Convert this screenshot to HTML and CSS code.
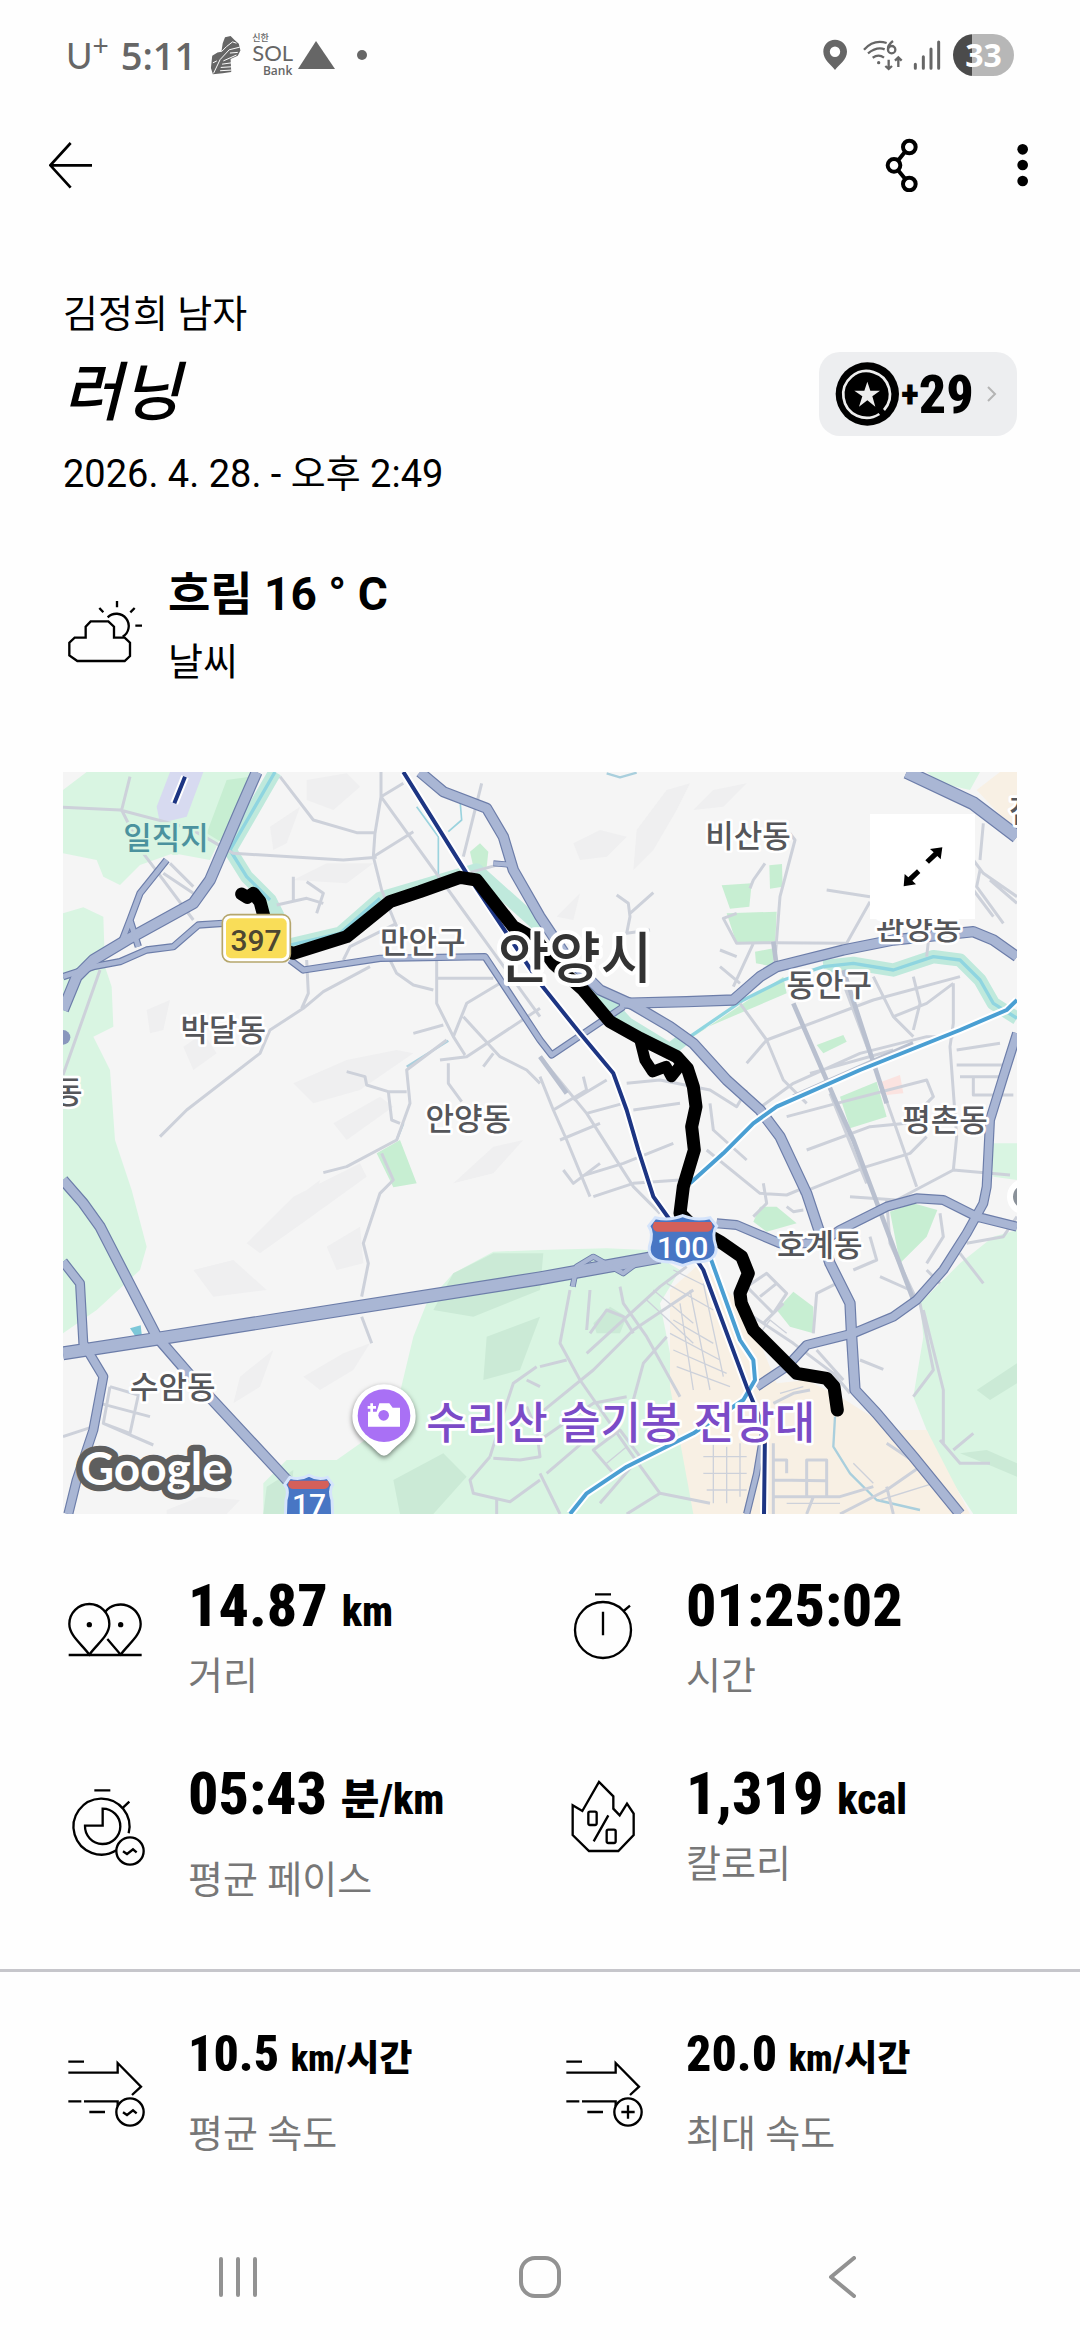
FILE: index.html
```html
<!DOCTYPE html>
<html lang="ko">
<head>
    <meta charset="UTF-8">
    <meta name="viewport" content="width=device-width, initial-scale=1.0">
    <title>러닝</title>
    <link rel="stylesheet" href="styles.css">
</head>
<body>
    <!-- Status bar -->
    <div class="status-bar">
        <div class="status-left">
            <span class="carrier">U<sup>+</sup></span>
            <span class="clock">5:11</span>
            <svg class="shoe" viewBox="610 105 96 122" aria-hidden="true">
                <path fill="#666" d="M655 112 672 108 684 120 697 132 702 152 694 168 672 178 674 218 648 222 618 225 612 206 616 168 632 158 644 156 648 130Z"/>
                <path fill="none" stroke="#fff" stroke-width="3" d="M620 222 640 180 668 150 700 142M644 156 660 140 678 126 690 130M650 184 690 166M646 194 674 190M642 204 674 202M640 214 674 212M618 190 630 184M670 160 694 158"/>
            </svg>
            <span class="sol"><span class="sol-top">신한</span><span class="sol-name">SOL</span><span class="sol-bank">Bank</span></span>
            <svg class="triangle" viewBox="0 0 37 28" aria-hidden="true"><path fill="#666" d="M18 0 37 28H0Z"/></svg>
            <span class="dot"></span>
        </div>
        <div class="status-right">
            <svg width="24" height="32" viewBox="808 116 74 94" aria-hidden="true"><path fill="#666" fill-rule="evenodd" d="M845 116c-21 0-36 16-36 37 0 24 24 41 36 56 12-15 37-32 37-56 0-21-16-37-37-37Zm0 21a16 16 0 1 1 0 32 16 16 0 0 1 0-32Z"/></svg>
            <svg class="wifi" width="40" height="32" viewBox="928 116 120 96" aria-hidden="true">
                <g fill="none" stroke="#666" stroke-width="7">
                    <path d="M931 148Q960 116 999 128M943 159Q970 138 993 147M957 172Q975 160 991 172"/>
                    <path d="M1018 122Q1002 134 1003 147M1005 178V205M995 197 1005 206 1015 197M1034 200V173M1024 181 1034 171 1044 181"/>
                    <circle cx="1014" cy="148" r="11"/>
                </g>
                <circle cx="975" cy="187" r="5" fill="#666"/>
            </svg>
            <svg width="28" height="30" viewBox="1072 118 84 90" aria-hidden="true"><path stroke="#666" stroke-width="9" stroke-linecap="round" d="M1079 191V203M1103 168V203M1126 145V203M1149 124V203"/></svg>
            <span class="battery">33</span>
        </div>
    </div>

    <!-- App bar -->
    <header class="app-bar">
        <button type="button" class="icon-button" aria-label="뒤로">
            <svg width="44" height="48" viewBox="147 426 132 144"><path fill="none" stroke="#000" stroke-width="8" d="M276 499H152M212 432 151 499 212 566"/></svg>
        </button>
        <div class="app-actions">
            <button type="button" class="icon-button" aria-label="공유">
                <svg width="34" height="54" viewBox="991 410 102 162">
                    <g fill="none" stroke="#000" stroke-width="12"><path d="M1032 475 1050 453M1032 509 1050 531"/><circle cx="1064" cy="437" r="19"/><circle cx="1018" cy="492" r="19"/><circle cx="1064" cy="548" r="19"/></g>
                </svg>
            </button>
            <button type="button" class="icon-button" aria-label="더보기">
                <svg width="12" height="44" viewBox="1384 427 36 132"><circle cx="1401" cy="446" r="16"/><circle cx="1401" cy="493" r="16"/><circle cx="1401" cy="541" r="16"/></svg>
            </button>
        </div>
    </header>

    <main>
        <section class="activity">
            <p class="text">김정희 남자</p>
            <div class="title-row">
                <h1>러닝</h1>
                <a class="points" href="#points">
                    <svg width="64" height="64" viewBox="164 98 192 192" aria-hidden="true">
                        <circle cx="261" cy="194" r="95"/>
                        <path fill="none" stroke="#eee" stroke-width="8" d="M311 242A70 70 0 1 0 297 254"/>
                        <path fill="#eee" d="M261 157 270 184 299 184 276 201 285 232 261 213 236 232 246 201 222 184 252 184Z"/>
                    </svg>
                    <span class="plus">+</span><span>29</span>
                    <svg class="chevron" width="10" height="16" viewBox="0 0 10 16" aria-hidden="true"><path fill="none" stroke="#b4b4b4" stroke-width="2" d="M1 1 8 8 1 15"/></svg>
                </a>
            </div>
            <p class="text">2026. 4. 28. - 오후 2:49</p>
        </section>

        <section class="weather">
            <svg class="icon" viewBox="72 960 240 240" aria-hidden="true">
                <path d="M137 1103V1070L152 1054H205L222 1070V1103H254L270 1118V1158L254 1173H112L88 1156V1118L104 1103Z"/>
                <path d="M203 1042A37 37 0 1 1 248 1100M231 993V1012M178 1014 190 1027M284 1014 271 1027M286 1067H306"/>
            </svg>
            <div>
                <p class="weather-value">흐림 16 ° C</p>
                <p class="text">날씨</p>
            </div>
        </section>

        <section class="map">
            <svg viewBox="9 6 2862 2226" role="img" aria-label="안양시 러닝 경로">
                <rect x="9" y="6" width="2862" height="2226" fill="#f5f5f5"/>
                <!-- Hills -->
                <g class="hills">
                    <path d="M740 30 860 10 900 50 820 120 740 90ZM630 170 720 110 680 220 640 240ZM700 330 800 280 940 280 860 340Z"/>
                    <path d="M1540 220 1620 180 1700 200 1640 260 1560 270ZM1730 180 1820 60 1890 40 1850 120 1780 240 1720 300ZM1490 440 1560 370 1540 450ZM1900 120 1960 60 2060 40 1990 110Z"/>
                    <path d="M260 720 330 690 310 780 270 790ZM370 830 430 790 470 850 400 900ZM700 940 860 870 1010 840 1060 850 900 960 760 1000ZM820 1060 960 980 1000 1010 860 1110Z"/>
                    <path d="M700 1290 780 1230 760 1310 700 1340ZM560 1420 700 1280 900 1180 920 1220 740 1350 600 1450ZM800 1430 900 1370 910 1480 830 1500ZM730 1820 850 1750 930 1720 880 1800 780 1860ZM540 1820 640 1740 600 1850 520 1900ZM1180 1240 1300 1130 1390 1110 1300 1210ZM400 1500 520 1470 620 1560 460 1580ZM320 2220 420 2180 540 2190 500 2232H320Z"/>
                </g>
                <!-- Parks and town blocks -->
                <g fill="#d9f5e2">
                    <path d="M9 60 80 6H575L450 270 340 250 240 285 180 345 130 320 110 270 9 250Z"/>
                    <path d="M9 430 70 412 130 440 135 590 155 650 160 770 100 800 150 900 165 1110 215 1260 260 1430 240 1500 110 1620 9 1690Z"/>
                    <path d="M1180 1510 1300 1445 1440 1440 1640 1435 1760 1440 1860 1500 1800 1600 1850 1850 1900 2120 1950 2232H610V2140L680 2070 830 2070 1000 1950 1060 1700 1100 1600Z"/>
                    <path d="M2800 1400 2871 1380V2232H2740L2640 2080 2600 1980 2560 1880 2590 1700 2580 1600 2700 1480Z"/>
                    <path d="M2790 1120 2871 1120V1230L2800 1220ZM2600 6H2760L2730 60 2640 40Z"/>
                </g>
                <g fill="#cbead6">
                    <path d="M1180 1510 1300 1450 1450 1450 1440 1560 1240 1640 1120 1620ZM1280 1700 1440 1640 1380 1800 1270 1830ZM1000 2130 1150 2050 1220 2120 1120 2232H1020ZM620 2150 700 2100 690 2232H610Z"/>
                    <path d="M2750 1860 2871 1780V1840L2790 1890ZM2700 2050 2800 2090 2871 2120V2080L2780 2040ZM1600 1660 1650 1610 1700 1640 1680 1690 1610 1690Z"/>
                </g>
                <path fill="#f8f0e4" d="M1830 1560 1920 1480 2060 1620 2150 1840 2240 1830 2340 1880 2500 1980 2600 1980 2730 2232H1900L1830 1850ZM2750 60 2820 6H2871V190Z"/>
                <g fill="#c7eed2">
                    <path d="M2128 286 2166 282 2168 350 2130 356ZM1985 346 2075 340 2068 410 2010 416ZM2000 430 2150 425 2146 515 2030 522ZM2085 545 2140 535 2140 590 2088 580ZM1900 800 2170 620 2180 670 1910 785ZM2270 825 2350 795 2360 815 2290 850ZM2340 980 2450 935 2480 1040 2370 1075Z"/>
                    <path d="M2080 1355 2100 1310 2150 1310 2210 1360 2120 1385ZM2490 1325 2560 1300 2632 1320 2600 1400 2520 1480ZM2150 1620 2200 1565 2260 1610 2260 1690 2190 1670ZM1230 245 1260 220 1285 245 1280 292 1240 290ZM950 1150 1020 1110 1070 1240 1000 1252ZM440 190 500 30 570 20 490 220Z"/>
                </g>
                <path fill="#fbe3e0" d="M2465 935 2520 915 2530 970 2480 975Z"/>
                <path fill="#d7daf0" d="M290 110 330 6H430L380 140 300 160Z"/>
                <path fill="#7cc7d8" d="M210 1675 242 1666 246 1700 228 1702Z"/>
                <!-- Streams -->
                <g fill="none" stroke-linejoin="round">
                    <path stroke="#bfe9dc" stroke-width="40" d="M645 6 510 240 560 320 630 390 660 450M690 525 840 490 960 385 1130 335 1250 300 1440 470M1600 650 1700 760 1830 840 1880 800M2290 590 2380 580 2500 600 2620 560 2700 570 2760 630 2800 700 2871 745"/>
                    <path stroke="#8fd5e0" stroke-width="10" d="M645 6 510 240 560 320 630 390M690 525 840 490 960 385M1890 800 2050 690 2170 630 2290 590 2380 580 2500 600 2620 560 2700 570 2760 630 2800 700 2871 745"/>
                    <path stroke="#9bd3de" stroke-width="5" d="M1135 330V200L1070 110M1165 185 1205 150 1200 90"/>
                    <path stroke="#a9cfdd" stroke-width="7" d="M1165 812 1040 890M1640 10 1680 22 1730 8M1030 1060 1010 1110M2325 1940 2320 2030 2370 2110 2450 2190 2580 2220"/>
                </g>
                <!-- Side streets -->
                <g class="street">
                    <path d="M9 112 180 120 390 175 520 250 850 270 950 262M210 20 185 120 250 250 400 450M660 20 760 150 890 188 945 188 940 260 965 360 1010 470M963 6 963 80 945 190M963 80 1230 450 1440 740M1060 185 940 260M963 80 1030 40M1265 40 1210 260M1220 310 1330 280M650 405 740 385 790 400M700 320V390M740 335 790 370 770 430M310 310 400 370M330 280 400 350"/>
                    <path d="M9 915 120 600M300 1100 380 1020 600 850 630 780 730 715 790 665 930 590M740 570 745 670 725 715M850 570 870 530 1010 460M990 570 1010 610 1060 645 1120 660M1130 560 1130 700 1180 800 1215 855M1060 790 1150 765M1130 625H1300M1180 800 1220 700 1320 640M1210 740 1320 860 1400 900 1440 940M1140 870 1220 860 1440 715M1165 880V940L1205 995M1270 890 1300 850M860 905 915 920 920 945 985 965 1040 965M985 965 995 1050 1020 1060M1160 810 1040 900 1050 1000 1010 1110 860 1190 790 1208"/>
                    <path d="M965 1150 1000 1230 960 1270 910 1420 925 1480 905 1580M905 1640 935 1720M150 1850 235 1875 210 1990 130 1960 150 1850M120 1900 270 1940M130 1960 280 2025M9 2000 100 1970"/>
                    <path d="M1670 375 1705 400 1710 440 1700 490 1770 480M1780 368 1710 430M2190 190 2205 210 2160 380 2145 570M2115 280 2080 330 2070 355M2030 430 1990 445 2030 520 2140 518 2360 520 2430 395M2300 360 2430 380M2080 520 2020 650M1980 540 2030 560M1980 590 2040 640"/>
                </g>
                <g class="street">
                    <path d="M2040 700 2120 810 2170 930 2240 1000M2120 810 2440 690 2700 620M2060 880 2120 810M2090 1020 2200 940 2400 850 2600 800 2680 800M2250 910 2500 840M2350 640 2440 880 2500 1050 2570 1250M2440 620 2500 740 2600 700 2680 640M2500 740 2560 800M2560 620 2580 700 2560 780M2600 560 2610 470M2680 640 2680 760 2670 830 2690 1100 2680 1200"/>
                    <path d="M2690 840 2820 820M2690 885H2840M2700 920H2820M2740 920V975H2860M2180 1040 2330 1000 2600 930 2620 980 2540 1060M2240 1140 2430 1070 2540 1060M2310 970 2420 1240M2220 1270 2420 1190 2550 1150 2600 1100M2370 1280 2510 1290 2680 1200 2850 1215M2480 1290 2490 1420 2570 1590M2740 270 2770 310 2871 380M2740 360 2800 440M2760 300 2750 350 2830 460M2770 160 2760 270M2790 330 2871 400"/>
                    <path d="M1440 860 1580 1030 1720 1250 1800 1330M1440 920 1480 1020 1520 1110 1590 1280M1480 1020 1580 960 1570 920M1500 1110 1620 1060M1540 990 1640 930M1580 1030 1690 1000M1700 940 1800 930 1950 960 2030 1010 2060 960M1720 1020 1860 1000M1950 1000 1960 1080 2060 1170M1560 1220 1690 1180 1840 1120M1600 1280 1720 1240 1860 1230M1510 1200 1540 1240 1620 1180M1940 1140 2100 1270 2180 1275 2240 1250M2110 1240 2120 1300 2080 1340M2180 1310 2200 1325 2230 1320"/>
                    <path d="M2060 1550 2120 1510 2180 1570 2140 1630ZM2100 1580 2150 1540M2080 1640 2200 1720 2320 1810 2370 1870M2110 1660 2170 1600M2270 1740 2350 1830M2260 1690 2270 1570 2330 1540M2380 1500 2450 1470 2430 1400M2460 1520 2550 1560M2640 1330 2650 1400 2600 1480M2600 1500 2640 1540M2720 1420 2830 1400 2871 1340M2700 1450 2770 1540M2580 1600 2620 1800 2560 1880M2590 1620 2650 1860 2650 2020M2400 1770 2470 1798"/>
                </g>
                <g class="street">
                    <path d="M1530 1560 1500 1720 1560 1830 1720 2060 1800 2170 1950 2200M1580 1750 1800 1550 1880 1490M1440 1930 1600 1800 1720 1680 1900 1560M1440 1790 1520 1770M1580 1680 1590 1560M1590 1690 1640 1620 1690 1640 1720 1690M1680 1550 1690 1600 1760 1700 1860 1880M1440 2010 1600 1900 1700 1880M1720 1890 1750 1780 1820 1700M1440 2110 1500 2232M1460 2110 1600 1990M1600 2040 1680 1980 1740 2060 1660 2110ZM1740 2060 1620 2200M1800 2170 1700 2232"/>
                    <path d="M2140 2020V2232M2140 2130 2300 2132M2240 2070V2180H2300V2070ZM2140 2070H2180V2110M2140 2180 2340 2180 2440 2150M2340 2232 2480 2160 2580 2090M2240 2232 2260 2180M2480 2020 2570 2080 2640 2140M2640 2010 2700 2080 2790 2080M2680 2040 2740 1990M2140 1900 2200 1870 2250 1860M2480 2150 2500 2232M1300 2065 1380 2070 1440 2060 1430 1980 1400 1910M1290 2060 1340 1900 1360 1840 1430 1790M1290 2060 1230 2130 1240 2170 1350 2195 1440 2130M1400 1830 1440 1850M1310 2232V2190"/>
                    <path class="fine" d="M1780 1560 1900 1660M1760 1590 1900 1720M1840 1500 1960 1560M1820 1540 1960 1620M1840 1650 1960 1720M1830 1690 1980 1770M1840 1740 2000 1810M1850 1790 2010 1850M1890 1560 1950 1860M1930 1540 1990 1820M1860 1600 1900 1860M1960 2010V2200M2000 2030V2200M2040 2020V2180M1930 2060H2060M1930 2110H2060M1940 2160H2060M1640 2080 1700 2030M2160 1870 2230 1850M2100 1690 2130 1650 2180 1690M2180 2200 2340 2200M2380 2080 2440 2140M2460 2190 2620 2140"/>
                </g>
                <!-- Wider streets -->
                <path class="street wide" d="M2200 700 2330 1000 2380 1110 2560 1590M2140 515 2150 590M2350 600 2480 1000M1440 860 1520 970M2200 980 2560 820"/>
                <!-- Main roads, dark edge below and fill above -->
                <g class="road-edge">
                    <path stroke-width="36" d="M590 6 540 120 450 330 400 400 200 510 100 570 50 620 9 720"/>
                    <path stroke-width="22" d="M9 620 100 590 180 575 260 540 340 530 415 465 490 460M320 270 240 370 210 450 185 515M210 450 235 530M690 570 730 600 960 565 1275 560 1440 810 1475 855 1690 710M2110 1990 2090 2110 2060 2232"/>
                    <path stroke-width="34" d="M1080 6 1150 65 1280 115 1330 200 1360 300 1440 440 1520 560 1620 660 1720 705 1830 770 1900 820 2000 930 2100 1020 2160 1100 2240 1270 2310 1480 2370 1600 2375 1700 2385 1860 2450 1930 2560 2060 2700 2232"/>
                    <path stroke-width="34" d="M1680 700 1880 695 2020 690 2100 620 2150 590 2350 540 2500 510 2740 485 2800 510 2871 560M9 1230 70 1300 120 1370 290 1700 420 1850 690 2140"/>
                    <path stroke-width="42" d="M2540 6 2740 100 2871 200M9 1750 300 1705 1440 1525 1800 1460"/>
                    <path stroke-width="30" d="M2871 790 2830 920 2790 1050 2780 1250 2770 1300 2720 1390 2650 1500 2570 1590 2500 1640 2380 1690 2240 1725 2180 1790 2090 1850M1970 1360 2030 1365 2160 1420 2280 1420 2340 1380 2480 1310 2570 1285 2650 1290 2750 1340 2871 1370M9 1475 60 1540 70 1720 130 1820 100 1980 50 2130 25 2232"/>
                    <path stroke-width="18" d="M1538 1550 1550 1490 1600 1460 1690 1510 1730 1480M1300 280 1360 285"/>
                </g>
                <g class="road">
                    <path stroke-width="29" d="M590 6 540 120 450 330 400 400 200 510 100 570 50 620 9 720"/>
                    <path stroke-width="15" d="M9 620 100 590 180 575 260 540 340 530 415 465 490 460M320 270 240 370 210 450 185 515M210 450 235 530M690 570 730 600 960 565 1275 560 1440 810 1475 855 1690 710M2110 1990 2090 2110 2060 2232"/>
                    <path stroke-width="27" d="M1080 6 1150 65 1280 115 1330 200 1360 300 1440 440 1520 560 1620 660 1720 705 1830 770 1900 820 2000 930 2100 1020 2160 1100 2240 1270 2310 1480 2370 1600 2375 1700 2385 1860 2450 1930 2560 2060 2700 2232"/>
                    <path stroke-width="27" d="M1680 700 1880 695 2020 690 2100 620 2150 590 2350 540 2500 510 2740 485 2800 510 2871 560M9 1230 70 1300 120 1370 290 1700 420 1850 690 2140"/>
                    <path stroke-width="35" d="M2540 6 2740 100 2871 200M9 1750 300 1705 1440 1525 1800 1460"/>
                    <path stroke-width="23" d="M2871 790 2830 920 2790 1050 2780 1250 2770 1300 2720 1390 2650 1500 2570 1590 2500 1640 2380 1690 2240 1725 2180 1790 2090 1850M1970 1360 2030 1365 2160 1420 2280 1420 2340 1380 2480 1310 2570 1285 2650 1290 2750 1340 2871 1370M9 1475 60 1540 70 1720 130 1820 100 1980 50 2130 25 2232"/>
                    <path stroke-width="13" d="M1538 1550 1550 1490 1600 1460 1690 1510 1730 1480M1300 280 1360 285"/>
                </g>
                <circle cx="9" cy="802" r="22" fill="#8997bd"/>
                <!-- Railways -->
                <g fill="none" stroke-linejoin="round">
                    <path stroke="#fff" stroke-width="24" d="M1030 6 1220 310 1440 640 1560 790 1660 910 1700 1020 1735 1140 1780 1280 1830 1350 1930 1500 2060 1850 2115 1980 2112 2232M2871 690 2840 720 2700 780 2400 900 2150 1010 2080 1060 1990 1150 1890 1240M1950 1460 2040 1710 2080 1770 2085 1830 2050 1890 1900 1990 1700 2090 1580 2170 1530 2232M375 20 343 100"/>
                    <path stroke="#4a9fd3" stroke-width="12" d="M2871 690 2840 720 2700 780 2400 900 2150 1010 2080 1060 1990 1150 1890 1240M1950 1460 2040 1710 2080 1770 2085 1830 2050 1890 1900 1990 1700 2090 1580 2170 1530 2232"/>
                    <path stroke="#1d3583" stroke-width="12" d="M1030 6 1220 310 1440 640 1560 790 1660 910 1700 1020 1735 1140 1780 1280 1830 1350 1930 1500 2060 1850 2115 1980 2112 2232M375 20 343 100"/>
                </g>
                <!-- Route -->
                <path class="route" d="M545 372 562 382 580 370 600 395 612 440 640 530 700 550 860 500 990 395 1080 365 1200 322 1250 330 1360 470 1430 510 1480 580 1570 660 1650 755 1740 805 1850 860 1882 895 1900 950 1908 1010 1895 1070 1903 1140 1870 1250 1860 1330 1900 1370 1980 1415 2045 1460 2065 1510 2040 1570 2044 1600 2080 1680 2210 1810 2300 1825 2322 1850 2332 1920"/>
                <path class="route loop" d="M1740 810 1755 870 1778 905 1818 890 1834 920 1862 885"/>
                <!-- Place names -->
                <g class="place">
                    <text class="water" x="318" y="237">일직지</text>
                    <text x="1088" y="550">만안구</text>
                    <text x="490" y="812">박달동</text>
                    <text x="25" y="1000">동</text>
                    <text x="1225" y="1080">안양동</text>
                    <text x="2064" y="232">비산동</text>
                    <text x="2576" y="508">관양동</text>
                    <text x="2308" y="678">동안구</text>
                    <text x="2655" y="1082">평촌동</text>
                    <text x="2279" y="1458">호계동</text>
                    <text x="338" y="1885">수암동</text>
                    <text x="2890" y="155">점</text>
                    <text class="city" x="1545" y="625">안양시</text>
                    <text class="poi" x="1682" y="2008">수리산 슬기봉 전망대</text>
                </g>
                <!-- Road numbers -->
                <rect x="487" y="434" width="204" height="142" rx="24" fill="#fff" stroke="#b5a66c" stroke-width="5"/>
                <rect x="498" y="445" width="182" height="120" rx="15" fill="#f9dd58"/>
                <text class="number dark" x="588" y="542">397</text>
                <g class="shield">
                    <path fill="#4876c4" d="M1786 1343Q1830 1353 1868 1337Q1906 1353 1950 1343L1970 1368Q1954 1390 1968 1430Q1974 1478 1900 1476L1868 1486 1836 1476Q1762 1478 1768 1430Q1782 1390 1766 1368Z"/>
                    <path fill="#d4605a" stroke="none" d="M1782 1356H1954L1958 1370Q1952 1386 1940 1385H1796Q1782 1386 1778 1370Z"/>
                    <path fill="#4876c4" d="M690 2122Q720 2132 747 2116Q774 2132 802 2122L818 2144Q806 2160 816 2190L818 2240H676L678 2190Q688 2160 674 2144Z"/>
                    <path fill="#d4605a" stroke="none" d="M688 2132H804L808 2144Q802 2158 790 2157H702Q688 2158 684 2144Z"/>
                </g>
                <text class="number" x="1868" y="1463">100</text>
                <text class="number" x="747" y="2236">17</text>
                <!-- Viewpoint pin -->
                <path class="pin" fill="#fff" d="M877 1938a95 95 0 0 1 190 0c0 58-48 76-76 109q-19 20-38 0c-28-33-76-51-76-109Z"/>
                <circle cx="972" cy="1937" r="79" fill="#a970f5"/>
                <path fill="#fff" d="M924 1925H950L958 1900H988L998 1913H1020V1970H924ZM931 1900H939V1908H948V1916H939V1925H931V1916H923V1908H931Z"/>
                <circle cx="971" cy="1936" r="16" fill="#a970f5"/>
                <circle cx="2895" cy="1280" r="45" fill="#8a9199" stroke="#fff" stroke-width="18"/>
                <text class="google" x="62" y="2144">Google</text>
            </svg>
            <button type="button" class="expand" aria-label="지도 확대">
                <svg width="40" height="40" viewBox="1088 230 120 120"><path d="M1206 231 1201 267 1191 257 1166 280 1155 270 1180 246 1169 236ZM1090 348 1093 311 1104 321 1130 297 1140 308 1116 331 1127 342Z"/></svg>
            </button>
        </section>

        <section class="stats">
            <div class="stat">
                <svg class="icon" viewBox="72 150 240 240" aria-hidden="true">
                    <path d="M86 345H305M148 344C125 312 88 287 88 252A60 60 0 0 1 208 252C208 287 171 312 148 344ZM196 215A60 60 0 0 1 302 252C302 287 265 312 242 344L202 297"/>
                    <circle class="solid" cx="148" cy="254" r="8"/><circle class="solid" cx="242" cy="254" r="8"/>
                </svg>
                <div>
                    <p class="value">14.87 <span class="unit">km</span></p>
                    <p class="label">거리</p>
                </div>
            </div>
            <div class="stat">
                <svg class="icon" viewBox="66 150 240 240" aria-hidden="true"><circle cx="189" cy="270" r="84"/><path d="M165 163H213M189 215V286M251 213 270 197"/></svg>
                <div>
                    <p class="value">01:25:02</p>
                    <p class="label">시간</p>
                </div>
            </div>
            <div class="stat pace">
                <svg class="icon" viewBox="72 714 240 240" aria-hidden="true">
                    <path d="M266 880A84 84 0 1 0 229 931M163 751H211M249 803 268 785M188 806V857H135A53 53 0 1 0 188 806Z"/>
                    <circle cx="270" cy="933" r="41"/><path d="M249 934 261 942 279 928 290 937"/>
                </svg>
                <div>
                    <p class="value">05:43 <span class="unit"><span class="hangul">분</span>/km</span></p>
                    <p class="label">평균 페이스</p>
                </div>
            </div>
            <div class="stat">
                <svg class="icon" viewBox="66 714 240 240" aria-hidden="true">
                    <path d="M98 796 127 813 177 726 220 769V806L239 826 261 791 281 821V885L235 933H147L98 885ZM205 826 161 904"/>
                    <rect x="145" y="815" width="25" height="40" rx="5"/><rect x="200" y="869" width="27" height="40" rx="5"/>
                </svg>
                <div>
                    <p class="value">1,319 <span class="unit">kcal</span></p>
                    <p class="label">칼로리</p>
                </div>
            </div>
        </section>

        <section class="stats speed">
            <div class="stat">
                <svg class="icon" viewBox="72 264 240 240" aria-hidden="true">
                    <path d="M85 305H132M85 338H233V309L303 380 276 405M85 424H124M132 424H233V438M148 456H195"/>
                    <circle cx="270" cy="456" r="41"/><path d="M249 457 261 465 279 451 290 460"/>
                </svg>
                <div>
                    <p class="value">10.5 <span class="unit">km/<span class="hangul">시간</span></span></p>
                    <p class="label">평균 속도</p>
                </div>
            </div>
            <div class="stat">
                <svg class="icon" viewBox="66 264 240 240" aria-hidden="true">
                    <path d="M79 305H126M79 338H227V309L297 380 270 405M79 424H118M126 424H227V438M142 456H189"/>
                    <circle cx="264" cy="456" r="41"/><path d="M244 456H284M264 436V476"/>
                </svg>
                <div>
                    <p class="value">20.0 <span class="unit">km/<span class="hangul">시간</span></span></p>
                    <p class="label">최대 속도</p>
                </div>
            </div>
        </section>
    </main>

    <!-- System navigation -->
    <nav class="nav-bar">
        <button type="button" aria-label="최근 앱"><svg width="40" height="42" viewBox="0 0 40 42"><path d="M3 3V39M20 3V39M37 3V39"/></svg></button>
        <button type="button" aria-label="홈"><svg width="42" height="42" viewBox="0 0 42 42"><rect x="2" y="2" width="38" height="38" rx="14"/></svg></button>
        <button type="button" aria-label="이전"><svg width="28" height="42" viewBox="0 0 28 42"><path d="M26 2 3 21 26 40"/></svg></button>
    </nav>
</body>
</html>
```

FILE: styles.css
```css
* {
    box-sizing: border-box;
}

body {
    font-family: Roboto, "Noto Sans CJK KR", sans-serif;
    background-color: #fefefe;
    color: #000;
    margin: 0;
    min-height: 100vh;
    display: flex;
    flex-direction: column;
}

h1,
p {
    margin: 0;
}

svg {
    display: block;
    flex: none;
}

button {
    background: none;
    border: none;
    padding: 0;
    cursor: pointer;
}

/* Status bar */
.status-bar {
    height: 110px;
    padding: 0 66px 0 66px;
    display: flex;
    align-items: center;
    justify-content: space-between;
    color: #666;
}

.status-left,
.status-right {
    display: flex;
    align-items: center;
}

.carrier {
    font-family: Lato, sans-serif;
    font-size: 36px;
    line-height: 40px;
}

.carrier sup {
    font-size: 28px;
    line-height: 0;
}

.clock {
    font-family: "Open Sans", sans-serif;
    font-size: 38px;
    font-weight: 600;
    line-height: 40px;
    margin-left: 12px;
}

.shoe {
    width: 32px;
    height: 40px;
    margin-left: 14px;
}

.sol {
    display: flex;
    flex-direction: column;
    width: 40px;
    margin-left: 10px;
    font-family: Lato, "Noto Sans CJK KR", sans-serif;
    white-space: nowrap;
}

.sol-top {
    font-size: 9px;
    font-weight: 500;
    line-height: 9px;
}

.sol-name {
    font-size: 22px;
    line-height: 22px;
}

.sol-bank {
    font-family: "Open Sans", sans-serif;
    font-size: 12px;
    font-weight: 600;
    line-height: 13px;
    text-align: right;
}

.triangle {
    width: 37px;
    height: 28px;
    margin-left: 6px;
}

.dot {
    width: 10px;
    height: 10px;
    margin-left: 22px;
    border-radius: 50%;
    background-color: #666;
}

.status-right {
    gap: 10px;
}

.wifi {
    margin-left: 6px;
}

.battery {
    width: 61px;
    height: 42px;
    margin-left: 2px;
    border-radius: 21px;
    background: linear-gradient(to right, #4b4b4b 19px, #b7b7b7 19px);
    color: #fff;
    font-family: "Open Sans", sans-serif;
    font-size: 32px;
    font-weight: 700;
    line-height: 42px;
    text-align: center;
}

/* App bar */
.app-bar {
    height: 110px;
    padding: 0 51px 0 49px;
    display: flex;
    align-items: center;
    justify-content: space-between;
}

.app-actions {
    display: flex;
    align-items: center;
    gap: 98px;
}

/* Activity header */
.activity {
    padding: 66px 63px 0;
}

.text {
    font-size: 38px;
    line-height: 56px;
}

.title-row {
    display: flex;
    align-items: center;
    justify-content: space-between;
    height: 104px;
}

h1 {
    font-size: 64px;
    font-style: italic;
    font-weight: 500;
    line-height: 104px;
}

.points {
    display: flex;
    align-items: center;
    width: 198px;
    height: 84px;
    padding: 0 20px 0 16px;
    border-radius: 21px;
    background-color: #edeef0;
    color: #000;
    font-family: "Roboto Condensed", "Liberation Sans Narrow", Roboto, sans-serif;
    font-size: 54px;
    font-weight: 800;
    text-decoration: none;
}

.plus {
    font-size: 38px;
    margin-left: 2px;
}

.chevron {
    margin-left: auto;
}

/* Weather */
.weather {
    display: flex;
    gap: 24px;
    padding: 60px 64px 0;
}

.weather-value {
    font-size: 46px;
    font-weight: 700;
    line-height: 64px;
    margin-bottom: 8px;
}

.icon {
    width: 80px;
    height: 80px;
    overflow: visible;
    fill: none;
    stroke: #000;
    stroke-width: 7px;
}

.icon .solid {
    fill: #000;
    stroke: none;
}

.weather .icon {
    margin-top: 28px;
}

/* Map */
.map {
    position: relative;
    margin: 82px 63px 0;
}

.map > svg {
    width: 100%;
    height: auto;
}

.hills {
    fill: #efeff0;
}

.street {
    fill: none;
    stroke: #cdd1da;
    stroke-width: 9px;
    stroke-linejoin: round;
}

.street .fine {
    stroke-width: 4px;
}

.wide {
    stroke: #b9c0cf;
    stroke-width: 14px;
}

.road,
.road-edge {
    fill: none;
    stroke: #a9b6d4;
    stroke-linejoin: round;
}

.road-edge {
    stroke: #6c7da9;
}

.route {
    fill: none;
    stroke: #000;
    stroke-width: 39px;
    stroke-linecap: round;
    stroke-linejoin: round;
}

.loop {
    stroke-width: 34px;
}

.place text {
    font-family: "Noto Sans CJK KR", sans-serif;
    font-size: 93px;
    font-weight: 500;
    fill: #55565a;
    stroke: #fff;
    stroke-width: 16px;
    stroke-linejoin: round;
    paint-order: stroke;
    text-anchor: middle;
}

.place .water {
    fill: #4b929e;
    stroke: #d9f5e2;
}

.place .city {
    font-size: 168px;
    fill: #333;
    stroke-width: 24px;
}

.place .poi {
    font-size: 132px;
    fill: #7b4bc7;
}

.number {
    font-family: Roboto, sans-serif;
    font-size: 90px;
    font-weight: 500;
    fill: #fff;
    text-anchor: middle;
}

.number.dark {
    fill: #4d4731;
}

.shield {
    stroke: #d5e4fb;
    stroke-width: 9px;
}

.pin {
    filter: drop-shadow(0 6px 8px rgba(0, 0, 0, 0.5));
}

.google {
    font-family: Lato, sans-serif;
    font-size: 138px;
    font-weight: 700;
    fill: #fff;
    stroke: #5e5e5e;
    stroke-width: 38px;
    stroke-linejoin: round;
    paint-order: stroke;
}

.expand {
    position: absolute;
    top: 42px;
    right: 42px;
    width: 105px;
    height: 105px;
    background-color: #fff;
    display: flex;
    align-items: center;
    justify-content: center;
}

/* Stats */
.stats {
    display: grid;
    grid-template-columns: 1fr 1fr;
    row-gap: 40px;
    padding: 54px 20px 65px 64px;
}

.stat {
    display: flex;
    gap: 44px;
    min-height: 148px;
}

.stat .icon {
    margin-top: 22px;
}

.value {
    font-family: "Roboto Condensed", "Liberation Sans Narrow", Roboto, "Noto Sans CJK KR", sans-serif;
    font-size: 60px;
    font-weight: 800;
    line-height: 76px;
    margin-bottom: 8px;
    white-space: nowrap;
}

.unit {
    font-size: 42px;
    line-height: 1;
}

.hangul {
    font-family: "Noto Sans CJK KR", sans-serif;
    line-height: 1;
}

.pace .value {
    margin-bottom: 24px;
}

.label {
    color: #777;
    font-size: 38px;
    line-height: 48px;
}

.speed {
    border-top: 3px solid #c6c6cb;
    padding-bottom: 0;
}

.speed .value {
    font-size: 50px;
    line-height: 56px;
    margin-bottom: 28px;
}

.speed .unit {
    font-size: 36px;
}

/* System navigation */
.nav-bar {
    display: grid;
    grid-template-columns: repeat(3, 1fr);
    height: 126px;
    margin-top: auto;
    padding: 0 87px;
}

.nav-bar button {
    display: flex;
    align-items: center;
    justify-content: center;
}

.nav-bar svg {
    fill: none;
    stroke: #929292;
    stroke-width: 4px;
    stroke-linecap: round;
    stroke-linejoin: round;
}
```
